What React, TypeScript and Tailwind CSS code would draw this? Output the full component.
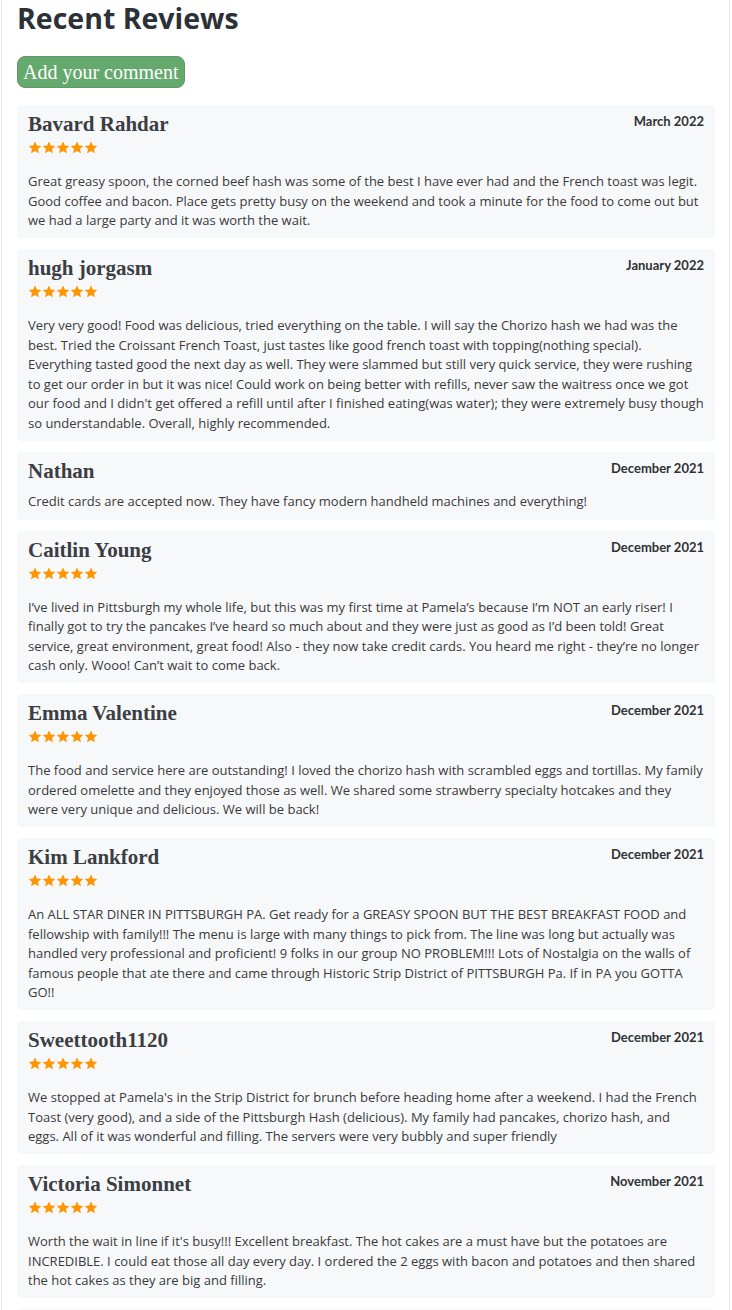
import React from 'react'

type Review = {
  name: string
  date: string
  stars: boolean
  text: string
}

const reviews: Review[] = [
  {
    name: 'Bavard Rahdar',
    date: 'March 2022',
    stars: true,
    text: 'Great greasy spoon, the corned beef hash was some of the best I have ever had and the French toast was legit. Good coffee and bacon. Place gets pretty busy on the weekend and took a minute for the food to come out but we had a large party and it was worth the wait.',
  },
  {
    name: 'hugh jorgasm',
    date: 'January 2022',
    stars: true,
    text: "Very very good! Food was delicious, tried everything on the table. I will say the Chorizo hash we had was the best. Tried the Croissant French Toast, just tastes like good french toast with topping(nothing special). Everything tasted good the next day as well. They were slammed but still very quick service, they were rushing to get our order in but it was nice! Could work on being better with refills, never saw the waitress once we got our food and I didn't get offered a refill until after I finished eating(was water); they were extremely busy though so understandable. Overall, highly recommended.",
  },
  {
    name: 'Nathan',
    date: 'December 2021',
    stars: false,
    text: 'Credit cards are accepted now. They have fancy modern handheld machines and everything!',
  },
  {
    name: 'Caitlin Young',
    date: 'December 2021',
    stars: true,
    text: 'I\u2019ve lived in Pittsburgh my whole life, but this was my first time at Pamela\u2019s because I\u2019m NOT an early riser! I finally got to try the pancakes I\u2019ve heard so much about and they were just as good as I\u2019d been told! Great service, great environment, great food! Also - they now take credit cards. You heard me right - they\u2019re no longer cash only. Wooo! Can\u2019t wait to come back.',
  },
  {
    name: 'Emma Valentine',
    date: 'December 2021',
    stars: true,
    text: 'The food and service here are outstanding! I loved the chorizo hash with scrambled eggs and tortillas. My family ordered omelette and they enjoyed those as well. We shared some strawberry specialty hotcakes and they were very unique and delicious. We will be back!',
  },
  {
    name: 'Kim Lankford',
    date: 'December 2021',
    stars: true,
    text: 'An ALL STAR DINER IN PITTSBURGH PA. Get ready for a GREASY SPOON BUT THE BEST BREAKFAST FOOD and fellowship with family!!! The menu is large with many things to pick from. The line was long but actually was handled very professional and proficient! 9 folks in our group NO PROBLEM!!! Lots of Nostalgia on the walls of famous people that ate there and came through Historic Strip District of PITTSBURGH Pa. If in PA you GOTTA GO!!',
  },
  {
    name: 'Sweettooth1120',
    date: 'December 2021',
    stars: true,
    text: "We stopped at Pamela's in the Strip District for brunch before heading home after a weekend. I had the French Toast (very good), and a side of the Pittsburgh Hash (delicious). My family had pancakes, chorizo hash, and eggs. All of it was wonderful and filling. The servers were very bubbly and super friendly",
  },
  {
    name: 'Victoria Simonnet',
    date: 'November 2021',
    stars: true,
    text: "Worth the wait in line if it's busy!!! Excellent breakfast. The hot cakes are a must have but the potatoes are INCREDIBLE. I could eat those all day every day. I ordered the 2 eggs with bacon and potatoes and then shared the hot cakes as they are big and filling.",
  },
]

function Star() {
  return (
    <svg width="14" height="13" viewBox="0 0 24 23" className="block">
      <path
        d="M12 0.8l3.3 7.2 7.8 0.8-5.8 5.3 1.7 7.7L12 17.8l-7 4 1.7-7.7L0.9 8.8l7.8-0.8z"
        fill="#ff9500"
      />
    </svg>
  )
}

function ReviewCard({ review }: { review: Review }) {
  return (
    <div
      className={
        review.stars
          ? 'bg-[#f7f8fa] rounded-[4px] pt-[7px] px-[11px] pb-[7.5px]'
          : 'bg-[#f7f8fa] rounded-[4px] pt-[7px] px-[11px] pb-[8.5px]'
      }
    >
      <div className="flex items-start justify-between">
        <h3 className="font-['Liberation_Serif',Georgia,serif] font-bold text-[21px] leading-[25px] text-[#3b3e43]">
          {review.name}
        </h3>
        <span className="font-['Lato',sans-serif] font-bold text-[13px] leading-[16px] mt-px text-[#2f3236]">
          {review.date}
        </span>
      </div>
      {review.stars && (
        <div className="flex mt-[4px] h-[13px] mb-[18px]">
          <Star />
          <Star />
          <Star />
          <Star />
          <Star />
        </div>
      )}
      <p
        className={
          (review.stars ? 'mt-[7px] ' : 'mt-[8px] ') +
          "font-['Open_Sans',sans-serif] text-[13px] leading-[19.5px] text-[#3a3a3a]"
        }
      >
        {review.text}
      </p>
    </div>
  )
}

export default function App() {
  return (
    <div className="w-[732px] h-[1310px] overflow-hidden bg-white">
      <div className="ml-px w-[729px] min-h-full border-x border-[#e4e4e4] pl-[15px] pr-[14px]">
        <h2 className="font-['Open_Sans',sans-serif] font-bold text-[28.5px] leading-[36px] text-[#2c3037]">
          Recent Reviews
        </h2>
        <button className="mt-[20px] h-[32px] px-[5px] rounded-[8px] bg-[#66a96f] border border-[#5c9c65] text-white font-['Liberation_Serif',Georgia,serif] text-[20px] leading-none">
          Add your comment
        </button>
        <div className="mt-[17px] flex flex-col gap-[11px] pb-[12px]">
          {reviews.map((r) => (
            <ReviewCard key={r.name} review={r} />
          ))}
          <div className="bg-[#f7f8fa] rounded-[4px] h-[60px]" />
        </div>
      </div>
    </div>
  )
}
